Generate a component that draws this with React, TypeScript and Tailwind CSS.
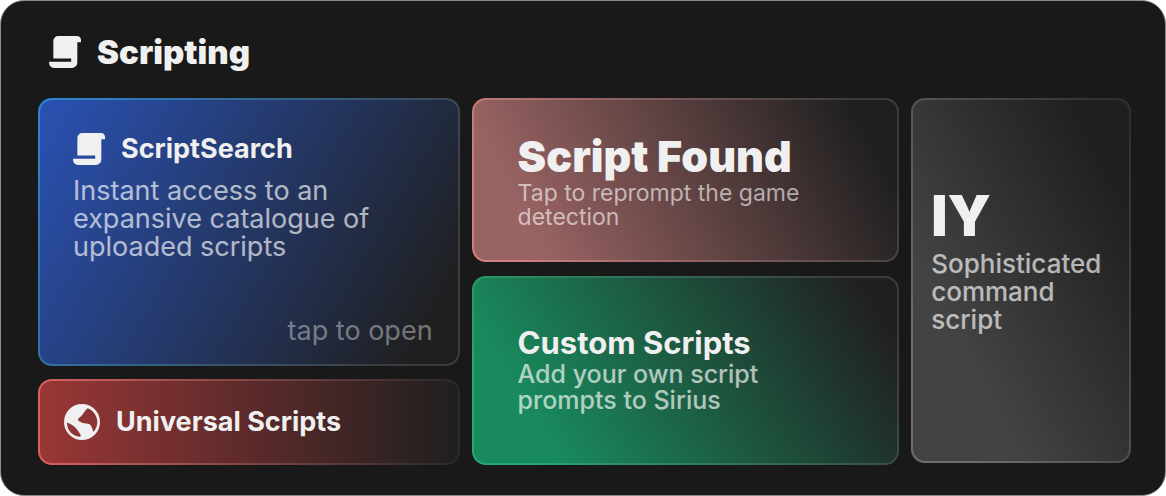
import React from "react";

function ScrollIcon() {
  return (
    <svg viewBox="0 0 33 33" className="h-8 w-8 shrink-0" fill="#f0f0f0" aria-hidden="true">
      <path d="M9.600 0H28.800a4.400 4.400 0 0 1 4.200 4.400V6.500h-3.800v20.800a5.600 5.600 0 0 1-5.600 5.600H5.200A5 5 0 0 1 .1 27.900V26.500H22.900V23.200H4.500V5A5 5 0 0 1 9.600 0Z" />
    </svg>
  );
}

function GlobeIcon() {
  return (
    <svg viewBox="2 2 20 20" className="h-9 w-9 shrink-0" aria-hidden="true">
      <path
        fill="#f0f0f0"
        fillRule="evenodd"
        d="M12 2a10 10 0 1 0 0 20 10 10 0 0 0 0-20ZM15.200 4.300c3.200 1.300 5.300 4.300 5.300 7.700 0 2.100-.8 4-2.100 5.500-.6-1.200-.9-3.200-2-4.100-1-.8-3-.3-4.300-1-1.200-.6-2.300-1-2.300-1.700 0-1.100 1.400-1.500 2.200-2.500 1-1.200 1.900-3 3.200-3.900ZM3.700 12.300c1.700.6 3.600 1.700 4.800 3 .8.900 1.700 2.200 2.400 3.200.5.700.7 1.700-.3 1.700-3.900-.5-7.100-3.500-6.900-7.900Z"
      />
    </svg>
  );
}

interface CardProps {
  className: string;
  children: React.ReactNode;
}

function Card({ className, children }: CardProps) {
  return (
    <button
      type="button"
      className={`flex w-full cursor-pointer rounded-[14px] border-2 border-transparent text-left ${className}`}
    >
      {children}
    </button>
  );
}

export default function App() {
  return (
    <div className="flex min-h-screen bg-white font-['Inter','Liberation_Sans',sans-serif]">
      <main className="flex flex-1 flex-col rounded-[24px] border border-[#8c8c8c] bg-[#191919] px-[34px] pt-[31px] pb-[30px] text-[#f0f0f0]">
        <header className="flex h-10 items-center gap-4 pl-[14px]">
          <ScrollIcon />
          <h1 className="text-[33px] leading-10 font-black">Scripting</h1>
        </header>

        <div className="mt-[26px] grid flex-1 grid-cols-[422fr_428fr_220fr] gap-x-[12px] pl-[3px]">
          <div className="flex flex-col gap-[13px]">
            <Card className="flex-1 flex-col px-[33px] pt-[31px] pb-[17px] [background:linear-gradient(120deg,#2a52b4,#1f1f1f_92%)_padding-box,linear-gradient(120deg,#2c88d4,#3c3c3c_88%)_border-box]">
              <span className="flex items-center gap-4">
                <ScrollIcon />
                <span className="text-[27px] leading-9 font-bold">ScriptSearch</span>
              </span>
              <span className="mt-[10px] text-[27px] leading-7 text-white/65">
                Instant access to an
                <br />
                expansive catalogue of
                <br />
                uploaded scripts
              </span>
              <span className="mt-auto -mr-2 self-end text-[27px] leading-8 text-white/40">tap to open</span>
            </Card>
            <Card className="h-[86px] items-center gap-4 px-6 [background:linear-gradient(90deg,#9a3636,#1f1f1f)_padding-box,linear-gradient(90deg,#d86262,#292929)_border-box]">
              <GlobeIcon />
              <span className="text-[27px] leading-8 font-bold">Universal Scripts</span>
            </Card>
          </div>

          <div className="flex flex-col gap-[14px]">
            <Card className="h-[164px] flex-col justify-center px-11 [background:linear-gradient(62deg,#9a6363_14%,#1f1f1f_91%)_padding-box,linear-gradient(62deg,#cd8080_10%,#3c3c3c_90%)_border-box]">
              <span className="text-[43px] leading-[50px] font-black">Script Found</span>
              <span className="text-[23px] leading-6 text-white/60">
                Tap to reprompt the game
                <br />
                detection
              </span>
            </Card>
            <Card className="flex-1 flex-col justify-center px-11 pb-1 [background:linear-gradient(58deg,#198a5d_16%,#211e1f_94%)_padding-box,linear-gradient(58deg,#26a873_10%,#3c3c3c_90%)_border-box]">
              <span className="text-[31px] leading-9 font-bold">Custom Scripts</span>
              <span className="text-[25px] leading-[26px] font-medium text-white/65">
                Add your own script
                <br />
                prompts to Sirius
              </span>
            </Card>
          </div>

          <Card className="mb-[2px] flex-col justify-center px-[18px] pb-[46px] [background:linear-gradient(62deg,#434343_27%,#1f1f1f_87%)_padding-box,linear-gradient(62deg,#6e6e6e_15%,#303030_95%)_border-box]">
            <span className="text-[56px] leading-[68px] font-black">IY</span>
            <span className="text-[26px] leading-7 font-medium text-white/65">
              Sophisticated
              <br />
              command
              <br />
              script
            </span>
          </Card>
        </div>
      </main>
    </div>
  );
}
